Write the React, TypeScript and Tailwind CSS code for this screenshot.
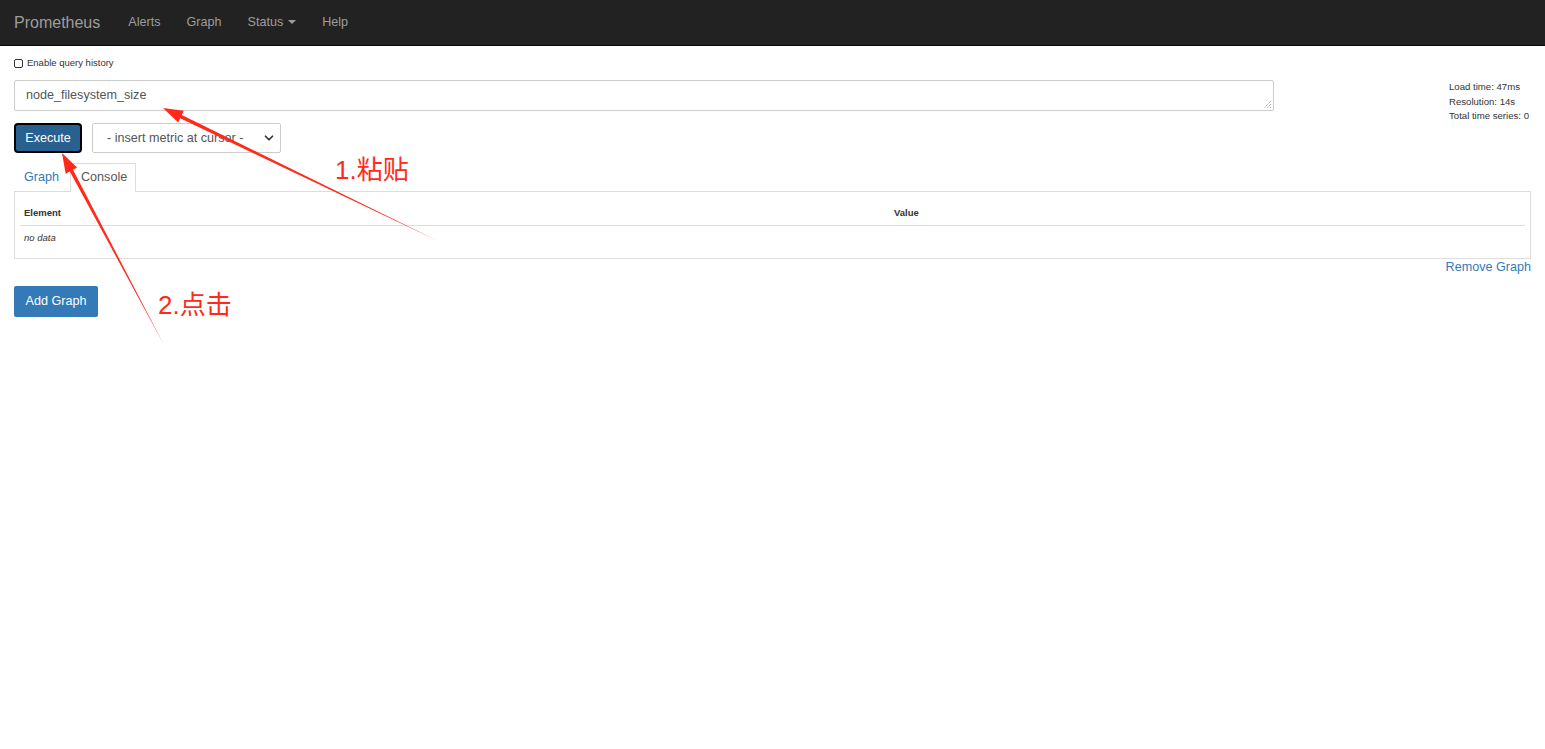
import { ChevronDown } from 'lucide-react';

function arrowPoints(tx: number, ty: number, hx: number, hy: number) {
  const dx = hx - tx;
  const dy = hy - ty;
  const len = Math.sqrt(dx * dx + dy * dy);
  const ux = dx / len;
  const uy = dy / len;
  const nx = -uy;
  const ny = ux;
  const bx = hx - ux * 20;
  const by = hy - uy * 20;
  const pts = [
    [tx, ty],
    [bx + nx * 1.8, by + ny * 1.8],
    [bx + nx * 6.5, by + ny * 6.5],
    [hx, hy],
    [bx - nx * 6.5, by - ny * 6.5],
    [bx - nx * 1.8, by - ny * 1.8],
  ];
  return pts.map((p) => p.join(',')).join(' ');
}

const font = { fontFamily: '"Liberation Sans", Arial, sans-serif' };
const cjk = { fontFamily: '"Liberation Sans", "Noto Sans CJK SC", sans-serif' };

export default function App() {
  return (
    <div className="relative min-h-screen bg-white text-[#333]" style={font}>
      {/* navbar */}
      <nav className="h-[46px] bg-[#222] border-b border-[#080808] flex items-center px-[14px]">
        <span className="text-[16px] text-[#9d9d9d] mr-[28px]">Prometheus</span>
        <div className="flex items-center gap-[26px] text-[12.6px] text-[#9d9d9d]">
          <span>Alerts</span>
          <span>Graph</span>
          <span className="flex items-center gap-[5px]">
            Status
            <span className="w-0 h-0 border-l-[4px] border-r-[4px] border-t-[4px] border-l-transparent border-r-transparent border-t-[#9d9d9d]" />
          </span>
          <span>Help</span>
        </div>
      </nav>

      <div className="px-[14px]">
        {/* query history */}
        <div className="flex items-center gap-[4px] mt-[10px] text-[9.5px]">
          <span className="w-[9px] h-[9px] border-[1.5px] border-[#333] rounded-[2px]" />
          <span>Enable query history</span>
        </div>

        <div className="flex mt-[10px]">
          <div className="flex-1">
            <div className="w-[1260px] h-[31px] border border-[#ccc] rounded-[2px] text-[12.6px] text-[#555] px-[11px] flex items-center relative">
              node_filesystem_size
              <svg className="absolute right-[2px] bottom-[2px]" width="8" height="8" viewBox="0 0 8 8">
                <path d="M8 1 L1 8 M8 4 L4 8 M8 7 L7 8" stroke="#888" strokeWidth="1" strokeDasharray="1 1" />
              </svg>
            </div>
            <div className="flex items-center gap-[10px] mt-[12px]">
              <button className="w-[68px] h-[30px] bg-[#286090] text-white text-[12.6px] border-2 border-black rounded-[4px]">
                Execute
              </button>
              <div className="w-[189px] h-[30px] border border-[#ccc] rounded-[2px] text-[12.6px] text-[#555] flex items-center justify-between pl-[14px] pr-[4px]">
                <span>- insert metric at cursor -</span>
                <ChevronDown className="w-[14px] h-[14px] text-[#333]" strokeWidth={3} />
              </div>
            </div>
          </div>
          <div className="w-[82px] text-[9.6px] leading-[14.5px] text-[#333] whitespace-nowrap">
            <div>Load time: 47ms</div>
            <div>Resolution: 14s</div>
            <div>Total time series: 0</div>
          </div>
        </div>

        {/* tabs */}
        <div className="flex items-end mt-[10px] h-[28px] text-[12.6px]">
          <span className="w-[56px] h-[28px] pl-[10px] flex items-center text-[#337ab7]">Graph</span>
          <span className="w-[66px] h-[29px] pl-[10px] flex items-center border border-b-0 border-[#ddd] bg-white text-[#555] relative top-[1px] pb-[1px]">
            Console
          </span>
        </div>
        <div className="border border-[#ddd] h-[68px] px-[5px]">
          <div className="flex border-b border-[#ddd] h-[34px] items-center pt-[8px] text-[9.5px] font-bold">
            <span className="w-[874px] pl-[4px]">Element</span>
            <span>Value</span>
          </div>
          <div className="text-[9.5px] italic pl-[4px] pt-[5px]">no data</div>
        </div>
        <div className="flex justify-end h-[15px] items-center mt-[1px] text-[12.6px] text-[#337ab7]">Remove Graph</div>

        <button className="mt-[11px] w-[84px] h-[31px] bg-[#337ab7] text-white text-[12.6px] rounded-[2px]">
          Add Graph
        </button>
      </div>

      {/* annotations */}
      <svg className="absolute left-0 top-0 pointer-events-none" width="1545" height="749">
        <polygon points={arrowPoints(438, 241, 163, 108)} fill="#ff2a1a" />
        <polygon points={arrowPoints(163, 343, 62, 153)} fill="#ff2a1a" />
      </svg>
      <div className="absolute left-[335px] top-[157px] text-[26px] text-[#ff2a1a] leading-none" style={cjk}>
        1.粘贴
      </div>
      <div className="absolute left-[158px] top-[292px] text-[26px] text-[#ff2a1a] leading-none" style={cjk}>
        2.点击
      </div>
    </div>
  );
}
